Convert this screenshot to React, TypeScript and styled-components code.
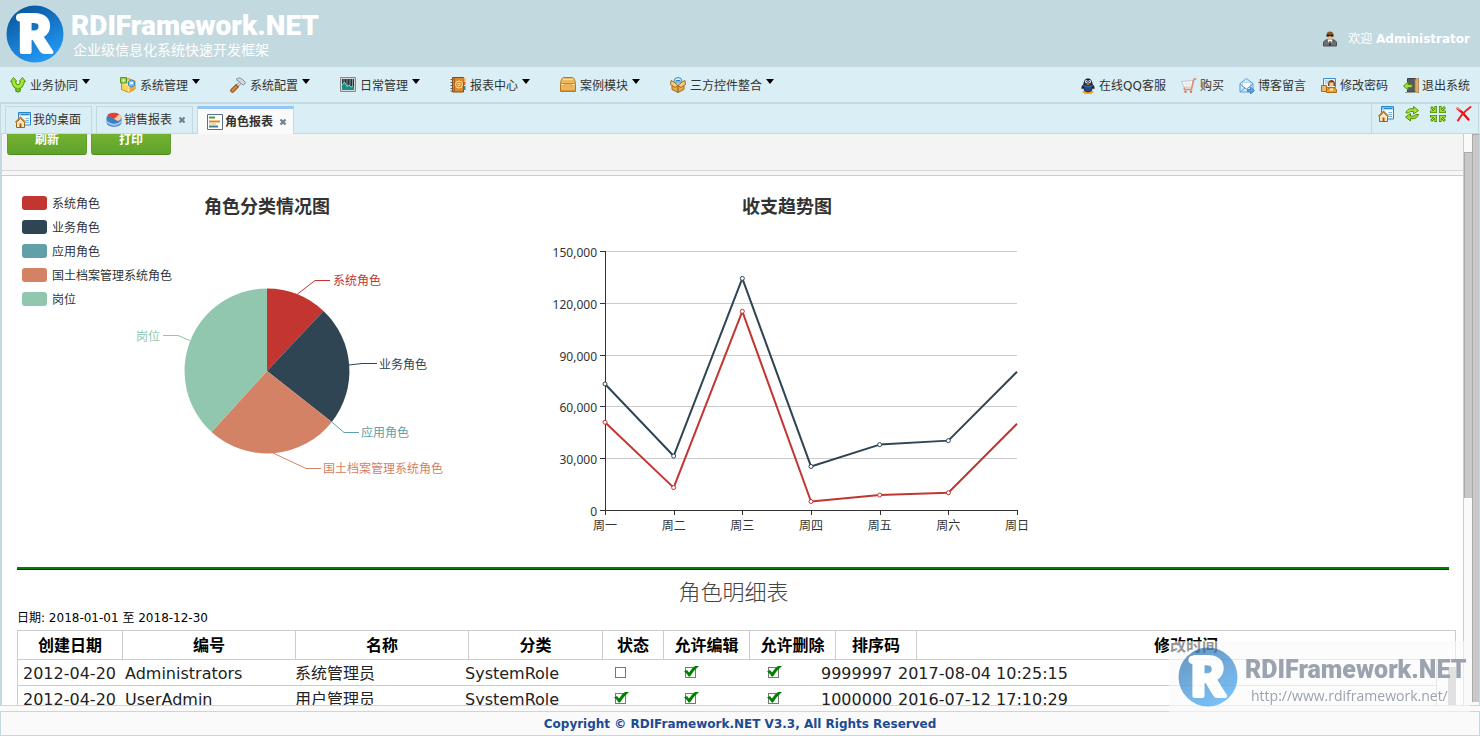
import React from "react";
import styled, { createGlobalStyle } from "styled-components";

const sans = `"DejaVu Sans", "Noto Sans CJK SC", sans-serif`;
const chartFont = `"Noto Sans", "Noto Sans CJK SC", sans-serif`;
const edge = "#c3d9e0";
const bar = "#daeef5";

const GlobalStyle = createGlobalStyle`
  *, *::before, *::after { box-sizing: border-box; }
  body { margin: 0; background: #fafafa; color: #000; font: 12px/16px ${sans}; }
  button { font: inherit; color: inherit; background: none; border: 0; padding: 0; margin: 0; cursor: pointer; }
  svg { display: block; flex: none; }
  a { color: inherit; text-decoration: none; }
`;

const Page = styled.div`
  display: flex;
  flex-direction: column;
  height: 100vh;
  overflow: hidden;
`;

const Header = styled.header`
  display: flex;
  align-items: center;
  flex: none;
  height: 67px;
  padding: 0 10px 0 6px;
  background: ${edge};
  color: #fff;
`;

const Brand = styled.div`
  display: flex;
  flex: 1;
  gap: 7px;
  align-items: center;
`;

const BrandText = styled.div`
  padding-top: 4px;
`;

const BrandName = styled.h1`
  margin: 0;
  font: 900 28px/28px Roboto, sans-serif;
`;

const BrandSlogan = styled.div`
  padding-left: 2px;
  font-size: 14px;
  line-height: 20px;
`;

const Welcome = styled.div`
  display: flex;
  align-items: center;
  padding-top: 10px;
  gap: 10px;
`;

const NavBar = styled.nav`
  display: flex;
  flex: none;
  justify-content: space-between;
  height: 37px;
  padding: 0 10px;
  background: ${bar};
  border-bottom: 2px solid ${edge};
  color: #333;
`;

const NavGroup = styled.div<{ $gap: number }>`
  display: flex;
  align-items: center;
  gap: ${(p) => p.$gap}px;
`;

const NavButton = styled.button`
  display: flex;
  align-items: center;
  gap: 4px;
  white-space: nowrap;
`;

const NavText = styled.span`
  padding-top: 2px;
`;

const NavLink = styled.a`
  display: flex;
  align-items: center;
  gap: 3px;
  padding-top: 2px;
  white-space: nowrap;
`;

const Caret = styled.span`
  align-self: flex-start;
  margin-top: 3px;
  border: 4px solid transparent;
  border-top: 5px solid #000;
  border-bottom: 0;
`;

const TabBar = styled.div`
  display: flex;
  flex: none;
  height: 30px;
  padding: 2px 0 0 4px;
  gap: 4px;
  background: ${bar};
  border-left: 1px solid ${edge};
  box-shadow: inset 0 -1px 0 ${edge};
`;

const Tab = styled.div<{ $active?: boolean; $fixed?: boolean }>`
  display: flex;
  align-items: center;
  gap: 5px;
  height: ${(p) => (p.$active ? 28 : 27)}px;
  padding: 0 ${(p) => (p.$fixed ? 9 : 6)}px 0 9px;
  color: #333;
  background: ${(p) => (p.$active ? "#fafafa" : "transparent")};
  border: 1px solid ${edge};
  border-bottom: 0;
  border-top: ${(p) => (p.$active ? "3px solid #98c7f3" : `1px solid ${edge}`)};
  font-weight: ${(p) => (p.$active ? 700 : 400)};
`;

const TabLabel = styled.button`
  display: flex;
  align-items: center;
  gap: 2px;
  padding-right: 1px;
`;

const TabTools = styled.div`
  display: flex;
  align-items: flex-start;
  gap: 10px;
  height: 30px;
  margin: -2px 1px 0 auto;
  padding: 2px 6px;
  border: 1px solid ${edge};
  border-top: 0;
  background: ${bar};
`;

const Workspace = styled.div`
  display: flex;
  flex: 1;
  min-height: 0;
  border: solid ${edge};
  border-width: 0 1px 1px 2px;
`;

const Content = styled.main`
  display: flex;
  flex: 1;
  flex-direction: column;
  min-width: 0;
  overflow: hidden;
  background: #f7f7f7;
  border-right: 1px solid #ccc;
`;

const Toolbar = styled.div`
  display: flex;
  flex: none;
  align-items: flex-end;
  gap: 4px;
  height: 37px;
  padding: 0 5px 15px;
  background: #f4f4f4;
  border-bottom: 1px solid #d8d8d8;
  overflow: hidden;
`;

const GreenButton = styled.button`
  flex: none;
  width: 80px;
  height: 30px;
  color: #fff;
  font-weight: 700;
  line-height: 28px;
  border: 1px solid;
  border-color: #6aa63a #62a02f #4f8a20;
  border-radius: 3px;
  background: linear-gradient(#7db72f, #5ea32e);
`;

const Report = styled.section`
  flex: 1;
  min-height: 0;
  margin-top: 4px;
  padding: 15px 7px 0 15px;
  overflow: hidden;
  background: #fff;
  border-top: 1px solid #ccc;
`;

const Charts = styled.div`
  display: flex;
  gap: 20px;
  height: 376px;
`;

const Chart = styled.svg`
  width: 500px;
  height: 360px;
  font: 12px ${chartFont};
  overflow: visible;
`;

const ChartTitle = styled.text`
  font-size: 18px;
  font-weight: 700;
  fill: #333;
  text-anchor: middle;
`;

const Rule = styled.hr`
  height: 3px;
  margin: 0 7px 0 0;
  border: 0;
  border-bottom: 1px solid #003c00;
  background: #008000;
`;

const ReportTitle = styled.h2`
  margin: 0;
  padding: 8px 6px 0 0;
  color: #444;
  font-size: 22px;
  font-weight: 300;
  line-height: 30px;
  text-align: center;
`;

const Period = styled.div`
  line-height: 20px;
  margin-bottom: 2px;
`;

const Grid = styled.div`
  border-top: 1px solid #ccc;
  border-left: 1px solid #ccc;
  font-size: 16px;
`;

const Table = styled.table`
  flex: 1;
  width: 100%;
  min-width: 0;
  table-layout: fixed;
  border-spacing: 0;
`;

const HeadCell = styled.th`
  height: 29px;
  padding: 2px 0 0;
  line-height: 20px;
  border: solid #ccc;
  border-width: 0 1px 1px 0;
`;

const GridBody = styled.div`
  display: flex;
  gap: 11px;
`;

const Cell = styled.td<{ $pad?: number }>`
  height: 26px;
  padding: 2px 0 0 ${(p) => p.$pad ?? 2}px;
  line-height: 20px;
  white-space: nowrap;
  overflow: hidden;
  color: #222;
  border-bottom: 1px solid #ccc;
  &:last-child { border-right: 1px solid #ccc; }
`;

const CheckCell = styled(Cell)`
  padding: 0;
  text-align: center;
`;

const GridThumb = styled.div`
  flex: none;
  width: 8px;
  margin-top: 7px;
  background: #bbb;
`;

const TickBox = styled.span`
  position: relative;
  display: inline-block;
  width: 11px;
  height: 11px;
  input {
    appearance: none;
    display: block;
    width: 11px;
    height: 11px;
    margin: 0;
    background: #fff;
    border: 1px solid #777;
  }
  svg {
    position: absolute;
    left: -1px;
    top: -2px;
    pointer-events: none;
  }
`;

const ScrollTrack = styled.div<{ $top: number; $width: number }>`
  flex: none;
  width: ${(p) => p.$width}px;
  padding-top: ${(p) => p.$top}px;
  background: #fafafa;
`;

const ScrollThumb = styled.div<{ $size: string }>`
  height: ${(p) => p.$size};
  background: #c8c8c8;
  border: solid #aaa;
  border-width: 1px 0 0 1px;
`;

const Footer = styled.footer`
  flex: none;
  height: 25px;
  margin-top: 5px;
  padding-top: 1px;
  color: #1c4b92;
  font-weight: 700;
  line-height: 23px;
  text-align: center;
  background: #fafafa;
  border: 1px solid ${edge};
`;

const Watermark = styled.aside`
  position: fixed;
  right: 10px;
  bottom: 20px;
  display: flex;
  align-items: center;
  gap: 7px;
  width: 301px;
  height: 75px;
  padding: 0 0 3px 9px;
  background: rgba(250, 250, 250, 0.6);
  color: #9aa3af;
  pointer-events: none;
  svg { opacity: 0.6; }
`;

const WatermarkText = styled.div`
  padding-top: 8px;
`;

const WatermarkName = styled.div`
  font: 900 25px/28px Roboto, sans-serif;
`;

const WatermarkUrl = styled.div`
  padding: 2px 0 0 6px;
  font: 14px/20px "Open Sans", sans-serif;
`;

function Logo({ size, id }: { size: number; id: string }) {
  return (
    <svg width={size} height={size} viewBox="0 0 58 58" aria-hidden="true">
      <defs>
        <linearGradient id={id} x1="0.2" y1="0" x2="0.7" y2="1">
          <stop offset="0" stopColor="#08549a" />
          <stop offset="1" stopColor="#249cf8" />
        </linearGradient>
      </defs>
      <circle cx="29" cy="29" r="28.5" fill={`url(#${id})`} />
      <text x="12" y="47" fontFamily="Lato" fontWeight="900" fontSize="51" fill="#fff" stroke="#fff" strokeWidth="4" strokeLinejoin="round">R</text>
      <path d="M14 12.500h8" stroke="#fff" strokeWidth="8" strokeLinecap="round" />
    </svg>
  );
}

function Icon({ children }: { children: React.ReactNode }) {
  return <svg width="16" height="16" viewBox="0 0 16 16" aria-hidden="true">{children}</svg>;
}

const icons = {
  collab: (
    <Icon>
      <path d="M3.5 3.5C4 8 5 9.500 8 9.500S12 8 12.500 3.500" fill="none" stroke="#4f9a06" strokeWidth="5" />
      <path d="M8 8v7" stroke="#4f9a06" strokeWidth="5" />
      <path d="M.5 4.500 3.500.500 7 4.500zM9 4.500 12.500.500 15.500 4.500z" fill="#9be036" stroke="#4f9a06" />
      <path d="M3.500 3.500C4 8 5 9.500 8 9.500S12 8 12.500 3.500M8 9v5" fill="none" stroke="#a4e63d" strokeWidth="3" />
      <path d="M5 12h6L8 15.500z" fill="#8ed42c" stroke="#4f9a06" />
      <path d="M6.500 4.500 8 3l1.500 1.500L8 7z" fill="#e8f6cf" />
    </Icon>
  ),
  manage: (
    <Icon>
      <path d="M1.500 4 8 1.500l7 2.500v8l-6 3.500-7.500-3z" fill="#fbd45e" stroke="#cf8a1c" />
      <path d="M2 6l7 2.500L15 5M9 8.500v7" fill="none" stroke="#fff0b8" />
      <path d="M9.500 9l5-3v6l-5 3z" fill="#f2a93a" />
      <path d="M8.500 4.500 11.500 3l3 1.500v4L11.500 10l-3-1.500z" fill="#7cc5ef" stroke="#3a89c4" />
      <path d="M10 5h3v2h-3z" fill="#e4f6ff" />
      <path d="M.5.500h6v5.500h-6z" fill="#9ccf4f" stroke="#5a9a20" />
      <path d="M2 3l2-1 1 2-2 1z" fill="#e8f7c8" />
    </Icon>
  ),
  hammer: (
    <Icon>
      <path d="M2.500 13.500 6.500 9.500" stroke="#8a4a18" strokeWidth="4.500" strokeLinecap="round" />
      <path d="M2.500 13.500 6 10" stroke="#d6883a" strokeWidth="2.500" strokeLinecap="round" />
      <path d="M7.500 8.500 11 5" stroke="#8d949a" strokeWidth="3" />
      <path d="M7.500 8.500 11 5" stroke="#e4e7ea" strokeWidth="1.200" />
      <path d="M6 2.500C8 .500 11 .500 13 3l2.500 2.500-2 2.500-2-1-3-3z" fill="#d6d9dc" stroke="#808890" />
    </Icon>
  ),
  monitor: (
    <Icon>
      <path d="M.5.500h15v14H.500z" fill="#d8d8d4" stroke="#888" />
      <path d="M2 2h12v11H2z" fill="#28323a" />
      <path d="M4 2v6M7 2v7M10 2v6M12.500 2v7" stroke="#8a949a" />
      <path d="M2 13V8l2.500-3L7 9.500 9 8l2 2 2-1 1 1v3z" fill="#1f8a86" />
      <path d="M2 8l2.500-3L7 9.500 9 8l2 2 2-1" fill="none" stroke="#7fe0d4" />
    </Icon>
  ),
  addressBook: (
    <Icon>
      <path d="M2.500.500h11v14.500h-11z" fill="#d98a2c" stroke="#8a4a0c" />
      <path d="M14.500 1v4" stroke="#f0b060" strokeWidth="2" />
      <path d="M14.500 5v3" stroke="#e8631c" strokeWidth="2" />
      <path d="M14.500 9v4" stroke="#3a8a9a" strokeWidth="2" />
      <path d="M4.500 1v14" stroke="#b06414" />
      <circle cx="9" cy="7.500" r="3.500" fill="none" stroke="#fbe3b4" />
      <circle cx="9" cy="7.500" r="1.300" fill="none" stroke="#fbe3b4" />
      <path d="M.5 2.500h3M.5 5.500h3M.5 8.500h3M.5 11.500h3M.5 14h3" stroke="#666" />
    </Icon>
  ),
  chest: (
    <Icon>
      <path d="M.5 6.500C1 3 2 .500 4 .500h8c2 0 3 2.500 3.500 6v8H.500z" fill="#eeb75c" stroke="#b87824" />
      <path d="M1 6.500h14" stroke="#c88a34" />
      <path d="M1 7.500h14M3 2.500h10" stroke="#ffe2a0" />
      <path d="M4.500 7.500h7v1.500h-7z" fill="#f8d080" stroke="#c8862e" strokeWidth="0.500" />
      <path d="M1 13.500h14" stroke="#d6953a" />
    </Icon>
  ),
  package: (
    <Icon>
      <path d="M2 6l6 2.500L14 6v6.500L8 15.500l-6-3z" fill="#e4ab4e" stroke="#a46c1c" />
      <path d="M8 8.500v7" stroke="#8c5812" />
      <circle cx="8" cy="4.500" r="4" fill="#d9effb" stroke="#2d8ac8" />
      <path d="M6 6.500v-3h4v3M8 3.500v3" fill="none" stroke="#2d7fc0" />
      <path d="M1 3.500 4 5l4 3.500-3 2L.500 7.500zM15 3.500 12 5 8 8.500l3 2 4.500-3z" fill="#f2cc7c" stroke="#a46c1c" />
    </Icon>
  ),
  agent: (
    <Icon>
      <path d="M1.500 15v-3c0-2 2-3 4-3.500h5c2 .500 4 1.500 4 3.500v3z" fill="#6c6f73" stroke="#4b4e52" />
      <path d="M5.500 8.500h5L8 15z" fill="#fff" />
      <path d="M7.500 10h1l.5 4-1 1-1-1z" fill="#222" />
      <path d="M5 2h6v5L9.500 9h-3L5 7z" fill="#e9b684" />
      <path d="M4.500 3.500C4.500-.500 11.500-.500 11.500 3.500z" fill="#8a5520" />
      <path d="M4.500 3.500h7v2H9L8 4.500 7 5.500H4.500z" fill="#111" />
    </Icon>
  ),
  penguin: (
    <Icon>
      <ellipse cx="8" cy="14" rx="5.500" ry="2" fill="#f3a21b" />
      <path d="M1.500 11C1 8 3 7 3.500 6 3.500-1.500 12.500-1.500 12.500 6c.5 1 2.500 2 2 5l-2-.500c0 5-9 5-9 0z" fill="#16233f" />
      <ellipse cx="8" cy="10.500" rx="3.500" ry="3" fill="#244a86" />
      <circle cx="6.300" cy="3.500" r="1.500" fill="#dfe6f2" />
      <circle cx="9.700" cy="3.500" r="1.500" fill="#dfe6f2" />
      <circle cx="6.700" cy="3.500" r="0.600" fill="#111" />
      <circle cx="9.300" cy="3.500" r="0.600" fill="#111" />
      <path d="M5 5.500h6L8 7z" fill="#f3a21b" />
      <path d="M3.500 7.500Q8 10 12.500 7.500" fill="none" stroke="#3a62a8" strokeWidth="1.500" />
    </Icon>
  ),
  cart: (
    <Icon>
      <path d="M.5 3.500 12 2.500 10.500 9H3z" fill="#fff" stroke="#c0c0c0" />
      <path d="M3 6h8M5 3.500l.500 5.500M8 3.500v5.500" stroke="#e0e0e0" />
      <path d="M15.500 1H13L10.500 11.500H3.500L3 9.500" fill="none" stroke="#e88a60" strokeWidth="1.400" />
      <circle cx="4.500" cy="13.800" r="1.200" fill="#d9764a" />
      <circle cx="10" cy="13.800" r="1.200" fill="#d9764a" />
    </Icon>
  ),
  mail: (
    <Icon>
      <path d="M1 5.500 7.500.500 14 5.500v8.500H1z" fill="#cfe8fb" stroke="#5a9fd6" />
      <path d="M3.500 4.500h8v4l-4 2.500-4-2.500z" fill="#fff" stroke="#9cc6e6" strokeWidth="0.700" />
      <path d="M1 6l6.500 5L14 6M1 14l5-4" fill="none" stroke="#5a9fd6" />
      <path d="M8.500 11.500h3V9l4 3.500-4 3.500v-2.500h-3z" fill="#5fa8e2" stroke="#2c6fae" strokeWidth="0.700" />
    </Icon>
  ),
  password: (
    <Icon>
      <path d="M2.500.500h12v9h-12z" fill="#e7f4fd" stroke="#3f8dcc" />
      <path d="M4 3h4M4 5h3" stroke="#8dbde3" />
      <path d="M.5 7.500h5v6h-5z" fill="#eeb868" stroke="#a96d1e" />
      <path d="M7 6c0-5.500 7-5.500 7 0v2H7z" fill="#7c4218" />
      <path d="M8.500 4.500h4v3.500l-2 1.500-2-1.500z" fill="#f6cf9c" />
      <path d="M5.500 14.500v-2.500c1-2.500 9-3.500 10 0v2.500z" fill="#f0a128" stroke="#b06a0c" />
      <path d="M9 10.500h3v2H9z" fill="#fff3d6" />
    </Icon>
  ),
  exit: (
    <Icon>
      <path d="M4.500.500h8v13.500h-8z" fill="#565b62" stroke="#3b4046" />
      <path d="M12 1.500l3.500-1.500v15L12 13.500z" fill="#dcae6c" stroke="#a87436" strokeWidth="0.700" />
      <path d="M2 14.500h10" stroke="#999" />
      <path d="M.500 8 5 4v2.500h4v3H5V12z" fill="#a2df3b" stroke="#4c8f10" />
    </Icon>
  ),
  home: (
    <Icon>
      <path d="M3.500.500h12v12.500h-12z" fill="#eef8ff" stroke="#2a86c8" />
      <path d="M4 1h11v2.500H4z" fill="#7cc0ec" />
      <path d="M6 2.500h8" stroke="#2a86c8" />
      <path d="M10.500 6.500h3.500M10.500 8.500h3.500M10.500 10.500h3.500" stroke="#78b6e0" />
      <path d="M1.500 10.500 5.500 6.500l4 4v5h-8z" fill="#fbe7bd" stroke="#9a6626" />
      <path d="M.5 10.500 5.500 5.500l5 5" fill="none" stroke="#c08038" strokeWidth="1.600" />
      <path d="M4.500 11.500h2v4h-2z" fill="#a25c1c" />
    </Icon>
  ),
  pie: (
    <Icon>
      <path d="M.5 6v4c0 6.500 15 6.500 15 0V6z" fill="#4a8cca" />
      <path d="M1 9q7 6 14 0v2q-7 5.500-14 0z" fill="#a5c9e8" />
      <ellipse cx="8" cy="6" rx="7.500" ry="5" fill="#3f7fc0" />
      <path d="M8 7 1.500 3C4 0 11 0 13 2.500z" fill="#ee3e2a" />
      <path d="M8 7 13 2.500C16.500 4 15.500 8 12 9z" fill="#fbc9a4" />
    </Icon>
  ),
  report: (
    <Icon>
      <path d="M.5.500h15v15H.500z" fill="#fff" stroke="#56708c" />
      <path d="M2 3.500h6" stroke="#4d9a36" strokeWidth="2" />
      <path d="M2 7.500h11" stroke="#e08a22" strokeWidth="2" />
      <path d="M2 10h7" stroke="#e8b44c" />
      <path d="M2 12.500h9" stroke="#3d80a2" strokeWidth="2" />
    </Icon>
  ),
  refresh: (
    <Icon>
      <path d="M2 7C2.500 3.500 6 2 9.500 3V.500l5 4-5 3.500V5.500C7.500 5 5.500 5.500 4.500 7z" fill="#b0e33c" stroke="#4f9205" />
      <path d="M14.500 8.500C13.500 12 10.500 13.500 6.500 12.500V15l-5-4 5-3.500V10c2 .500 4 0 5.500-1.500z" fill="#9bd628" stroke="#4f9205" />
    </Icon>
  ),
  shrink: (
    <Icon>
      {[0, 90, 180, 270].map((a) => (
        <g key={a} transform={`rotate(${a} 8 8)`} fill="none">
          <path d="M1 1l4 4M5.700 0v5.700H0" stroke="#4f9205" strokeWidth="2.600" />
          <path d="M1.500 1.500 5 5M5.700 1v4.700H1" stroke="#b4ec44" strokeWidth="1" />
        </g>
      ))}
    </Icon>
  ),
  close: (
    <Icon>
      <path d="M1.500 2.500C5 5 9 9 12.500 13.500" fill="none" stroke="#d81414" strokeWidth="2.300" strokeLinecap="round" />
      <path d="M14.500 1C9 5 5 9 2 14.500" fill="none" stroke="#f02020" strokeWidth="2" strokeLinecap="round" />
      <path d="M1.500 2 4 3.500" stroke="#ff9090" strokeWidth="2" strokeLinecap="round" />
    </Icon>
  ),
};

const CloseMark = () => (
  <svg width="8" height="8" viewBox="0 0 8 8" aria-hidden="true">
    <path d="M1.500 1.500l5 5M6.500 1.500l-5 5" stroke="#6f7f92" strokeWidth="2.200" />
  </svg>
);

const menus = [
  [icons.collab, "业务协同"],
  [icons.manage, "系统管理"],
  [icons.hammer, "系统配置"],
  [icons.monitor, "日常管理"],
  [icons.addressBook, "报表中心"],
  [icons.chest, "案例模块"],
  [icons.package, "三方控件整合"],
] as const;

const links = [
  [icons.penguin, "在线QQ客服"],
  [icons.cart, "购买"],
  [icons.mail, "博客留言"],
  [icons.password, "修改密码"],
  [icons.exit, "退出系统"],
] as const;

const tools = [
  [icons.home, "首页"],
  [icons.refresh, "刷新标签"],
  [icons.shrink, "全屏"],
  [icons.close, "关闭标签"],
] as const;

const legend = [
  ["系统角色", "#c23531"],
  ["业务角色", "#2f4554"],
  ["应用角色", "#61a0a8"],
  ["国土档案管理系统角色", "#d48265"],
  ["岗位", "#91c7ae"],
];

const slices = [
  { color: "#c23531", d: "M250 180V97.500A82.500 82.500 0 0 1 306.500 120Z" },
  { color: "#2f4554", d: "M250 180 306.500 120A82.500 82.500 0 0 1 314.800 231Z" },
  { color: "#d48265", d: "M250 180 314.800 231A82.500 82.500 0 0 1 194.500 241Z" },
  { color: "#91c7ae", d: "M250 180 194.500 241A82.500 82.500 0 0 1 250 97.500Z" },
];

const callouts = [
  { text: "系统角色", color: "#c23531", line: "280.500,103 298,89.500 313,89.500", x: 316, y: 94 },
  { text: "业务角色", color: "#2f4554", line: "332,174 345,172.500 360,172.500", x: 362, y: 178 },
  { text: "应用角色", color: "#61a0a8", line: "314.800,231 327,241.500 342,241.500", x: 344, y: 246 },
  { text: "国土档案管理系统角色", color: "#d48265", line: "256,262 289,277.500 304,277.500", x: 306, y: 282 },
  { text: "岗位", color: "#91c7ae", line: "173,149.500 161,144.500 146,144.500", x: 119, y: 150 },
];

function PieChart() {
  return (
    <Chart role="img" aria-label="角色分类情况图">
      <ChartTitle x="250" y="22">角色分类情况图</ChartTitle>
      {legend.map(([name, color], i) => (
        <g key={name}>
          <rect x="5" y={5 + i * 24} width="25" height="14" rx="3" fill={color} />
          <text x="35" y={17 + i * 24} fill="#333">{name}</text>
        </g>
      ))}
      {slices.map((s) => <path key={s.color} d={s.d} fill={s.color} />)}
      {callouts.map((c) => (
        <g key={c.text}>
          <polyline points={c.line} fill="none" stroke={c.color} />
          <text x={c.x} y={c.y} fill={c.color}>{c.text}</text>
        </g>
      ))}
    </Chart>
  );
}

const days = ["周一", "周二", "周三", "周四", "周五", "周六", "周日"];
const series = [
  { color: "#c23531", values: [51200, 13500, 115200, 5500, 9200, 10500, 50300] },
  { color: "#2f4554", values: [73300, 31700, 134200, 25700, 38300, 40600, 80300] },
];
const px = (i: number) => 68 + (i * 412) / 6;
const py = (v: number) => 320 - (v / 150000) * 260;

function LineChart() {
  return (
    <Chart role="img" aria-label="收支趋势图">
      <ChartTitle x="250" y="22">收支趋势图</ChartTitle>
      {[0, 1, 2, 3, 4, 5].map((n) => {
        const y = Math.floor(py(n * 30000)) + (n > 2 ? 0.5 : -0.5);
        return (
          <g key={n}>
            {n > 0 && <path d={`M68 ${y}H480`} stroke="#ccc" />}
            <path d={`M63 ${y}H68`} stroke="#333" />
            <text x="60" y={y + 5} textAnchor="end" fill="#333">{(n * 30000).toLocaleString("en-US")}</text>
          </g>
        );
      })}
      <path d="M68.500 60V320M68 319.500H481" stroke="#333" />
      {days.map((d, i) => (
        <g key={d}>
          <path d={`M${Math.round(px(i)) + 0.5} 320v4`} stroke="#333" />
          <text x={px(i)} y="339" textAnchor="middle" fill="#333">{d}</text>
        </g>
      ))}
      {series.map((s) => (
        <g key={s.color} stroke={s.color}>
          <polyline points={s.values.map((v, i) => `${px(i)},${py(v)}`).join(" ")} fill="none" strokeWidth="2" strokeLinejoin="bevel" />
          {s.values.slice(0, 6).map((v, i) => <circle key={i} cx={px(i)} cy={py(v)} r="2" fill="#fff" />)}
        </g>
      ))}
    </Chart>
  );
}

function Check({ on, label }: { on: boolean; label: string }) {
  return (
    <TickBox>
      <input type="checkbox" defaultChecked={on} aria-label={label} />
      {on && (
        <svg width="15" height="13" viewBox="0 0 15 13" aria-hidden="true">
          <path d="M0 6.500 3 5 5 7.500Q8 2.500 11 1h4Q9 6 6 11.500H4.500Q2.500 8 0 6.500z" fill="#008000" />
        </svg>
      )}
    </TickBox>
  );
}

const headings = ["创建日期", "编号", "名称", "分类", "状态", "允许编辑", "允许删除", "排序码", "修改时间"];
const headWidths = [105, 173, 173, 134, 61, 86, 86, 81];
const bodyWidths = [105, 170, 170, 127, 60, 80, 86, 77];
const rows = [
  { date: "2012-04-20", code: "Administrators", name: "系统管理员", kind: "SystemRole", flags: [false, true, true], sort: "9999997", time: "2017-08-04 10:25:15" },
  { date: "2012-04-20", code: "UserAdmin", name: "用户管理员", kind: "SystemRole", flags: [true, true, true], sort: "10000000", time: "2016-07-12 17:10:29" },
];

const Columns = ({ widths }: { widths: number[] }) => (
  <colgroup>
    {widths.map((w, i) => <col key={i} width={w} />)}
    <col />
  </colgroup>
);

export default function App() {
  return (
    <Page>
      <GlobalStyle />
      <Header>
        <Brand>
          <Logo size={58} id="brand-fill" />
          <BrandText>
            <BrandName>RDIFramework.NET</BrandName>
            <BrandSlogan>企业级信息化系统快速开发框架</BrandSlogan>
          </BrandText>
        </Brand>
        <Welcome>
          {icons.agent}
          <span>欢迎 <b>Administrator</b></span>
        </Welcome>
      </Header>
      <NavBar>
        <NavGroup $gap={30}>
          {menus.map(([icon, name]) => (
            <NavButton key={name}>{icon}<NavText>{name}</NavText><Caret /></NavButton>
          ))}
        </NavGroup>
        <NavGroup $gap={15}>
          {links.map(([icon, name]) => (
            <NavLink key={name} href="#">{icon}{name}</NavLink>
          ))}
        </NavGroup>
      </NavBar>
      <TabBar>
        <Tab $fixed><TabLabel>{icons.home}我的桌面</TabLabel></Tab>
        <Tab>
          <TabLabel>{icons.pie}销售报表</TabLabel>
          <button aria-label="关闭销售报表"><CloseMark /></button>
        </Tab>
        <Tab $active>
          <TabLabel>{icons.report}角色报表</TabLabel>
          <button aria-label="关闭角色报表"><CloseMark /></button>
        </Tab>
        <TabTools>
          {tools.map(([icon, name]) => <button key={name} aria-label={name}>{icon}</button>)}
        </TabTools>
      </TabBar>
      <Workspace>
        <Content>
          <Toolbar>
            <GreenButton>刷新</GreenButton>
            <GreenButton>打印</GreenButton>
          </Toolbar>
          <Report>
            <Charts>
              <PieChart />
              <LineChart />
            </Charts>
            <Rule />
            <ReportTitle>角色明细表</ReportTitle>
            <Period>日期: 2018-01-01 至 2018-12-30</Period>
            <Grid>
              <Table>
                <Columns widths={headWidths} />
                <thead>
                  <tr>{headings.map((h) => <HeadCell key={h}>{h}</HeadCell>)}</tr>
                </thead>
              </Table>
              <GridBody>
                <Table>
                  <Columns widths={bodyWidths} />
                  <tbody>
                    {rows.map((r) => (
                      <tr key={r.code}>
                        <Cell $pad={5}>{r.date}</Cell>
                        <Cell>{r.code}</Cell>
                        <Cell>{r.name}</Cell>
                        <Cell>{r.kind}</Cell>
                        {r.flags.map((on, i) => (
                          <CheckCell key={i}><Check on={on} label={`${r.name} ${headings[4 + i]}`} /></CheckCell>
                        ))}
                        <Cell $pad={5}>{r.sort}</Cell>
                        <Cell $pad={5}>{r.time}</Cell>
                      </tr>
                    ))}
                  </tbody>
                </Table>
                <GridThumb />
              </GridBody>
            </Grid>
          </Report>
        </Content>
        <ScrollTrack $top={18} $width={8}><ScrollThumb $size="346px" /></ScrollTrack>
        <ScrollTrack $top={0} $width={7}><ScrollThumb $size="calc(100% - 3px)" /></ScrollTrack>
      </Workspace>
      <Footer>Copyright © RDIFramework.NET V3.3, All Rights Reserved</Footer>
      <Watermark>
        <Logo size={60} id="watermark-fill" />
        <WatermarkText>
          <WatermarkName>RDIFramework.NET</WatermarkName>
          <WatermarkUrl>http://www.rdiframework.net/</WatermarkUrl>
        </WatermarkText>
      </Watermark>
    </Page>
  );
}
